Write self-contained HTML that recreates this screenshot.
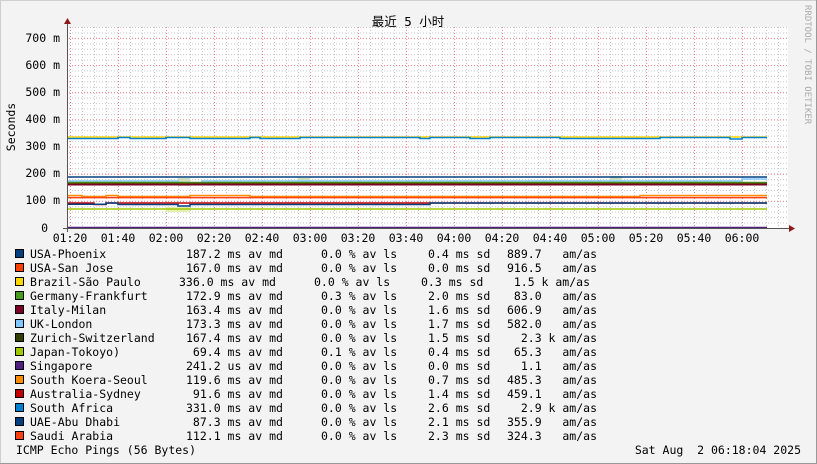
<!DOCTYPE html>
<html><head><meta charset="utf-8"><style>
body{margin:0;width:817px;height:464px;overflow:hidden;background:#f3f3f3;}
svg{position:absolute;left:0;top:0}
.t{font-family:"DejaVu Sans Mono","Liberation Mono","Noto Sans CJK SC",monospace;font-size:11.5px;fill:#000;white-space:pre}
</style></head><body>
<svg width="817" height="464" xmlns="http://www.w3.org/2000/svg">
<defs>
<pattern id="vmin" x="70" y="0" width="12" height="464" patternUnits="userSpaceOnUse"><line x1="0.5" y1="0" x2="0.5" y2="464" stroke="#c8c8c8" stroke-dasharray="1,2"/></pattern>
<pattern id="hmin" x="0" y="228" width="817" height="5.432" patternUnits="userSpaceOnUse"><line x1="0" y1="0.5" x2="817" y2="0.5" stroke="#c8c8c8" stroke-dasharray="1,2"/></pattern>
<pattern id="vmaj" x="70" y="0" width="48" height="464" patternUnits="userSpaceOnUse"><line x1="0.5" y1="0" x2="0.5" y2="464" stroke="#f08080" stroke-dasharray="1,2"/></pattern>
<pattern id="hmaj" x="0" y="228" width="817" height="27.16" patternUnits="userSpaceOnUse"><line x1="0" y1="0.5" x2="817" y2="0.5" stroke="#f08080" stroke-dasharray="1,2"/></pattern>
</defs>
<rect x="0.5" y="0.5" width="816" height="463" fill="#f3f3f3" stroke="#cfcfcf"/>
<line x1="816.5" y1="0" x2="816.5" y2="464" stroke="#999"/>
<line x1="0" y1="463.5" x2="817" y2="463.5" stroke="#999"/>
<rect x="67" y="27" width="721" height="201" fill="#fff"/>
<rect x="67" y="27" width="721" height="201" fill="url(#vmin)"/>
<rect x="67" y="27" width="721" height="201" fill="url(#hmin)"/>
<rect x="67" y="27" width="721" height="201" fill="url(#vmaj)"/>
<rect x="67" y="27" width="721" height="201" fill="url(#hmaj)"/>
<g fill="none" stroke-width="1.5">
<rect x="178" y="178" width="12" height="8" fill="#cfe0c0" stroke="none"/>
<rect x="298" y="178" width="12" height="6" fill="#cfe0c0" stroke="none"/>
<rect x="610" y="176" width="12" height="8" fill="#cfe0c0" stroke="none"/>
<rect x="166" y="207" width="24" height="5" fill="#e4f0b0" stroke="none"/>
<path d="M67 137H767" stroke="#ffd700"/>
<path d="M67 138.5H118V137.5H130V138.5H166V137.5H190V138.5H250V137.5H260V138.5H300V137.5H420V138.5H430V137.5H470V138.5H490V137.5H560V138.5H660V137.5H730V139H742V137.5H767" stroke="#0080d0"/>
<path d="M67 177H767" stroke="#004080"/>
<path d="M67 181H178V183H202V181H742V179H767" stroke="#80c8ff"/>
<path d="M67 182.5H767" stroke="#4a9a20"/>
<path d="M67 183.5H767" stroke="#304000"/>
<path d="M67 184.3H767" stroke="#ff4000" stroke-width="1"/>
<path d="M67 184.8H767" stroke="#7a0026"/>
<path d="M67 195.5H82V196.5H106V195.5H118V196.5H190V195.5H250V196.5H640V195.5H767" stroke="#ff8c00"/>
<path d="M67 197.6H767" stroke="#ff4010"/>
<path d="M67 203H94V204.5H106V203H767" stroke="#c00000"/>
<path d="M67 204.3H106V203H118V204.5H178V206H190V204.5H430V203H767" stroke="#004080"/>
<path d="M67 209H767" stroke="#a0c800"/>
<path d="M67 227.5H767" stroke="#502080"/>
</g>
<line x1="67.5" y1="24" x2="67.5" y2="232" stroke="#555"/>
<line x1="63" y1="228.5" x2="790" y2="228.5" stroke="#555"/>
<polygon points="64,24 71,24 67.5,18" fill="#8b1a1a"/>
<polygon points="789,225 789,232 795,228.5" fill="#8b1a1a"/>
<g class="t" text-anchor="end">
<text x="60" y="42" class="t">700 m</text>
<text x="60" y="69" class="t">600 m</text>
<text x="60" y="96" class="t">500 m</text>
<text x="60" y="123" class="t">400 m</text>
<text x="60" y="150" class="t">300 m</text>
<text x="60" y="177" class="t">200 m</text>
<text x="60" y="204" class="t">100 m</text>
<text x="48" y="232" class="t">0</text>
</g>
<text class="t" transform="translate(15,127) rotate(-90)" text-anchor="middle">Seconds</text>
<text x="408" y="26" text-anchor="middle" class="t" style="font-size:12.5px">最近 5 小时</text>
<text transform="translate(805,5) rotate(90)" style="font-family:'DejaVu Sans Mono',monospace;font-size:9px;fill:#aaa">RRDTOOL / TOBI OETIKER</text>
<g class="t" text-anchor="middle">
<text x="70" y="242" class="t">01:20</text><text x="118" y="242" class="t">01:40</text><text x="166" y="242" class="t">02:00</text><text x="214" y="242" class="t">02:20</text><text x="262" y="242" class="t">02:40</text><text x="310" y="242" class="t">03:00</text><text x="358" y="242" class="t">03:20</text><text x="406" y="242" class="t">03:40</text><text x="454" y="242" class="t">04:00</text><text x="502" y="242" class="t">04:20</text><text x="550" y="242" class="t">04:40</text><text x="598" y="242" class="t">05:00</text><text x="646" y="242" class="t">05:20</text><text x="694" y="242" class="t">05:40</text><text x="742" y="242" class="t">06:00</text>
</g>
<g stroke="#000" stroke-width="1">
<rect x="15.5" y="249.5" width="8" height="8" fill="#004080"/>
<rect x="15.5" y="263.5" width="8" height="8" fill="#ff4000"/>
<rect x="15.5" y="277.5" width="8" height="8" fill="#ffd700"/>
<rect x="15.5" y="291.5" width="8" height="8" fill="#4a9a20"/>
<rect x="15.5" y="305.5" width="8" height="8" fill="#7a0026"/>
<rect x="15.5" y="319.5" width="8" height="8" fill="#80c8ff"/>
<rect x="15.5" y="333.5" width="8" height="8" fill="#304000"/>
<rect x="15.5" y="347.5" width="8" height="8" fill="#a0c800"/>
<rect x="15.5" y="361.5" width="8" height="8" fill="#502080"/>
<rect x="15.5" y="375.5" width="8" height="8" fill="#ff8c00"/>
<rect x="15.5" y="389.5" width="8" height="8" fill="#c00000"/>
<rect x="15.5" y="403.5" width="8" height="8" fill="#0080d0"/>
<rect x="15.5" y="417.5" width="8" height="8" fill="#004080"/>
<rect x="15.5" y="431.5" width="8" height="8" fill="#ff4010"/>
</g>
<g class="t">
<text x="30" y="258" class="t">USA-Phoenix</text><text x="186" y="258" class="t">187.2 ms av md</text><text x="321" y="258" class="t">0.0 % av ls</text><text x="428" y="258" class="t">0.4 ms sd</text><text x="507" y="258" class="t">889.7   am/as</text>
<text x="30" y="272" class="t">USA-San Jose</text><text x="186" y="272" class="t">167.0 ms av md</text><text x="321" y="272" class="t">0.0 % av ls</text><text x="428" y="272" class="t">0.0 ms sd</text><text x="507" y="272" class="t">916.5   am/as</text>
<text x="30" y="286" class="t">Brazil-São Paulo</text><text x="179" y="286" class="t">336.0 ms av md</text><text x="314" y="286" class="t">0.0 % av ls</text><text x="421" y="286" class="t">0.3 ms sd</text><text x="500" y="286" class="t">  1.5 k am/as</text>
<text x="30" y="300" class="t">Germany-Frankfurt</text><text x="186" y="300" class="t">172.9 ms av md</text><text x="321" y="300" class="t">0.3 % av ls</text><text x="428" y="300" class="t">2.0 ms sd</text><text x="507" y="300" class="t"> 83.0   am/as</text>
<text x="30" y="314" class="t">Italy-Milan</text><text x="186" y="314" class="t">163.4 ms av md</text><text x="321" y="314" class="t">0.0 % av ls</text><text x="428" y="314" class="t">1.6 ms sd</text><text x="507" y="314" class="t">606.9   am/as</text>
<text x="30" y="328" class="t">UK-London</text><text x="186" y="328" class="t">173.3 ms av md</text><text x="321" y="328" class="t">0.0 % av ls</text><text x="428" y="328" class="t">1.7 ms sd</text><text x="507" y="328" class="t">582.0   am/as</text>
<text x="30" y="342" class="t">Zurich-Switzerland</text><text x="186" y="342" class="t">167.4 ms av md</text><text x="321" y="342" class="t">0.0 % av ls</text><text x="428" y="342" class="t">1.5 ms sd</text><text x="507" y="342" class="t">  2.3 k am/as</text>
<text x="30" y="356" class="t">Japan-Tokoyo)</text><text x="186" y="356" class="t"> 69.4 ms av md</text><text x="321" y="356" class="t">0.1 % av ls</text><text x="428" y="356" class="t">0.4 ms sd</text><text x="507" y="356" class="t"> 65.3   am/as</text>
<text x="30" y="370" class="t">Singapore</text><text x="186" y="370" class="t">241.2 us av md</text><text x="321" y="370" class="t">0.0 % av ls</text><text x="428" y="370" class="t">0.0 ms sd</text><text x="507" y="370" class="t">  1.1   am/as</text>
<text x="30" y="384" class="t">South Koera-Seoul</text><text x="186" y="384" class="t">119.6 ms av md</text><text x="321" y="384" class="t">0.0 % av ls</text><text x="428" y="384" class="t">0.7 ms sd</text><text x="507" y="384" class="t">485.3   am/as</text>
<text x="30" y="398" class="t">Australia-Sydney</text><text x="186" y="398" class="t"> 91.6 ms av md</text><text x="321" y="398" class="t">0.0 % av ls</text><text x="428" y="398" class="t">1.4 ms sd</text><text x="507" y="398" class="t">459.1   am/as</text>
<text x="30" y="412" class="t">South Africa</text><text x="186" y="412" class="t">331.0 ms av md</text><text x="321" y="412" class="t">0.0 % av ls</text><text x="428" y="412" class="t">2.6 ms sd</text><text x="507" y="412" class="t">  2.9 k am/as</text>
<text x="30" y="426" class="t">UAE-Abu Dhabi</text><text x="186" y="426" class="t"> 87.3 ms av md</text><text x="321" y="426" class="t">0.0 % av ls</text><text x="428" y="426" class="t">2.1 ms sd</text><text x="507" y="426" class="t">355.9   am/as</text>
<text x="30" y="440" class="t">Saudi Arabia</text><text x="186" y="440" class="t">112.1 ms av md</text><text x="321" y="440" class="t">0.0 % av ls</text><text x="428" y="440" class="t">2.3 ms sd</text><text x="507" y="440" class="t">324.3   am/as</text>
<text x="16" y="454" class="t">ICMP Echo Pings (56 Bytes)</text>
<text x="801" y="454" class="t" text-anchor="end">Sat Aug  2 06:18:04 2025</text>
</g>
</svg>
</body></html>
